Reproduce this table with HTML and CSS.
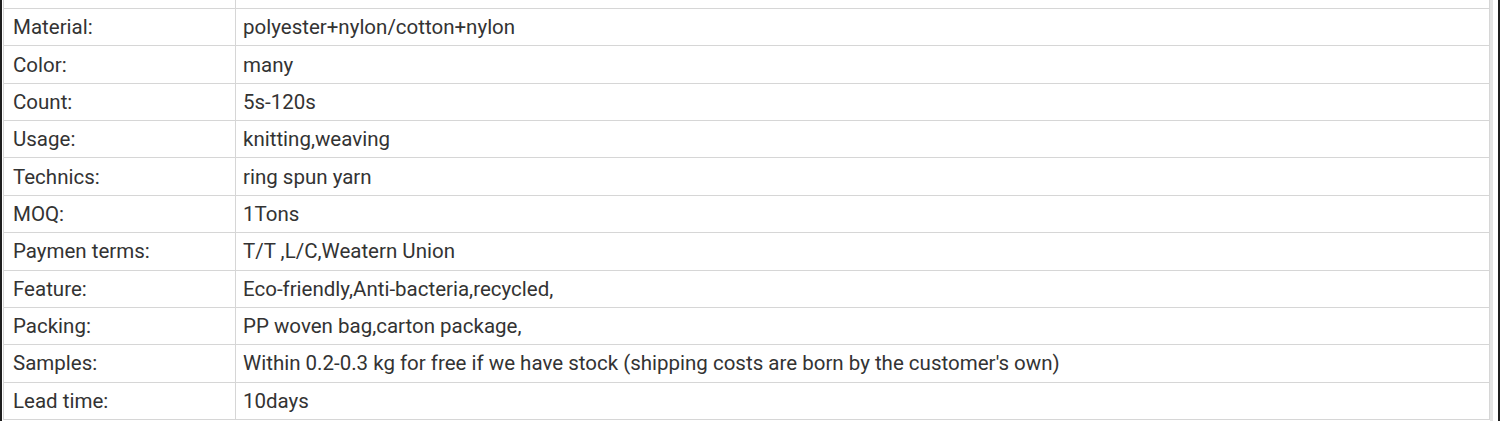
FILE: index.html
```html
<!DOCTYPE html>
<html>
<head>
<meta charset="utf-8">
<link rel="stylesheet" href="styles.css">
</head>
<body>
<div class="frame">
  <div class="inner">
    <table class="specs">
      <tbody>
        <tr class="cut"><td class="label"></td><td class="value"></td></tr>
        <tr><td class="label">Material:</td><td class="value">polyester+nylon/cotton+nylon</td></tr>
        <tr><td class="label">Color:</td><td class="value">many</td></tr>
        <tr><td class="label">Count:</td><td class="value">5s-120s</td></tr>
        <tr><td class="label">Usage:</td><td class="value">knitting,weaving</td></tr>
        <tr><td class="label">Technics:</td><td class="value">ring spun yarn</td></tr>
        <tr><td class="label">MOQ:</td><td class="value">1Tons</td></tr>
        <tr><td class="label">Paymen terms:</td><td class="value">T/T ,L/C,Weatern Union</td></tr>
        <tr><td class="label">Feature:</td><td class="value">Eco-friendly,Anti-bacteria,recycled,</td></tr>
        <tr><td class="label">Packing:</td><td class="value">PP woven bag,carton package,</td></tr>
        <tr><td class="label">Samples:</td><td class="value">Within 0.2-0.3 kg for free if we have stock (shipping costs are born by the customer's own)</td></tr>
        <tr><td class="label">Lead time:</td><td class="value">10days</td></tr>
      </tbody>
    </table>
  </div>
</div>
</body>
</html>
```

FILE: styles.css
```css
html, body {
  margin: 0;
  padding: 0;
  background: #fff;
}
.frame {
  width: 1500px;
  height: 421px;
  box-sizing: border-box;
  border-left: 2px solid #1e1e1e;
  border-right: 2px solid #1e1e1e;
  overflow: hidden;
  background: #fff;
}
.inner {
  margin-left: 1px;
  width: 1490px;
  height: 421px;
  box-sizing: border-box;
  border-right: 3px solid #e4e4e4;
  overflow: hidden;
}
.specs {
  width: 1487px;
  margin-top: -29.36px;
  border-collapse: collapse;
  table-layout: fixed;
  font-family: Roboto, "Liberation Sans", sans-serif;
  font-size: 20.5px;
  color: #333;
}
.specs tr {
  height: 37.36px;
}
.specs td {
  border: 1px solid #d6d6d6;
  padding: 0;
  vertical-align: middle;
  white-space: nowrap;
}
.specs .label {
  width: 222px;
  padding-left: 9px;
}
.specs .value {
  padding-left: 7px;
}
```
